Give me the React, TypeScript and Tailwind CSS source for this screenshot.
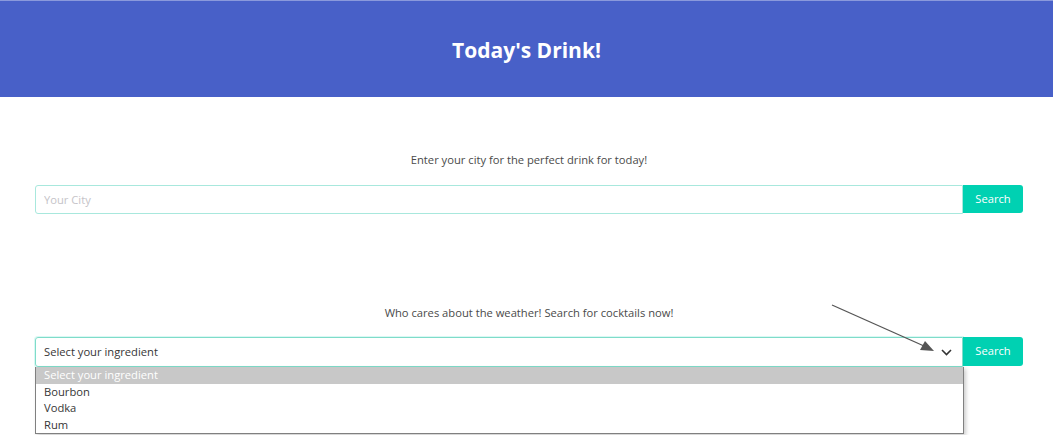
import React from "react";

export default function App() {
  const options = ["Select your ingredient", "Bourbon", "Vodka", "Rum"];
  return (
    <div className="relative w-[1053px] h-[435px] overflow-hidden bg-white font-['Open_Sans',sans-serif] text-[#4a4a4a]">
      <header className="h-[97px] bg-[#4860c8] border-t border-[#8a99dc] flex items-center justify-center">
        <h1 className="text-white font-bold text-[21px] leading-none mt-[3px]">Today's Drink!</h1>
      </header>

      <main className="ml-[35px] mr-[30px] pt-[54px]">
        <section className="flex flex-col">
          <p className="text-center text-[11.2px] leading-[18px]">Enter your city for the perfect drink for today!</p>
          <div className="mt-[16px] flex h-[29px]">
            <input
              className="flex-1 h-full border border-[#a8e8dd] rounded-l-[3px] px-[8px] text-[11.2px] outline-none placeholder:text-[#c5c3c8]"
              placeholder="Your City"
            />
            <button className="w-[60px] h-[28px] bg-[#00d1b2] text-white text-[11.2px] rounded-r-[3px]">Search</button>
          </div>
        </section>

        <section className="flex flex-col mt-[90px]">
          <p className="text-center text-[11.2px] leading-[18px]">Who cares about the weather! Search for cocktails now!</p>
          <div className="mt-[15px] flex">
            <div className="relative w-[928px]">
              <div className="h-[30px] border border-[#7fdcc9] rounded-l-[3px] shadow-[0_0_0_1px_rgba(0,209,178,0.15)] flex items-center justify-between pl-[8px] pr-[10px] text-[11.2px] text-[#363636]">
                <span>Select your ingredient</span>
                <svg width="11" height="7" viewBox="0 0 11 7" fill="none">
                  <path d="M1 1 L5.5 5.5 L10 1" stroke="#333" strokeWidth="1.6" />
                </svg>
              </div>
              <ul className="absolute left-0 top-[30px] w-[929px] bg-white border border-t-0 border-[#808080] shadow-[2px_2px_4px_rgba(0,0,0,0.2)] text-[11.2px]">
                {options.map((o, i) => (
                  <li
                    key={o}
                    className={
                      i === 0
                        ? "h-[16.5px] leading-[16.5px] pl-[8px] bg-[#c8c8c8] text-white"
                        : "h-[16.5px] leading-[16.5px] pl-[8px] text-[#363636]"
                    }
                  >
                    {o}
                  </li>
                ))}
              </ul>
            </div>
            <button className="w-[60px] h-[29px] bg-[#00d1b2] text-white text-[11.2px] rounded-r-[3px]">Search</button>
          </div>
        </section>
      </main>

      <svg className="absolute left-0 top-0 pointer-events-none" width="1053" height="435">
        <line x1="832" y1="305" x2="924" y2="346" stroke="#555" strokeWidth="1.3" />
        <polygon points="934,351 920,350 925,341" fill="#555" />
      </svg>
    </div>
  );
}
